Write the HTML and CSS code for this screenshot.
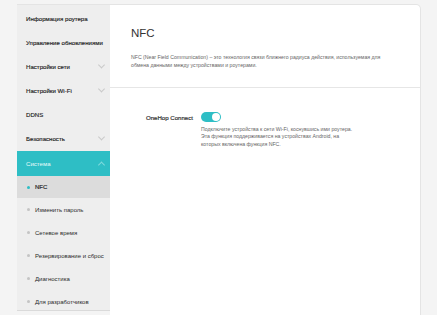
FILE: index.html
```html
<!DOCTYPE html>
<html lang="ru">
<head>
<meta charset="utf-8">
<link rel="stylesheet" href="styles.css">
</head>
<body>
<div class="layout">
  <nav class="sidebar">
    <div class="item">Информация роутера</div>
    <div class="item">Управление обновлениями</div>
    <div class="item">Настройки сети<span class="chev"></span></div>
    <div class="item">Настройки Wi-Fi<span class="chev"></span></div>
    <div class="item">DDNS</div>
    <div class="item">Безопасность<span class="chev"></span></div>
    <div class="item open">Система<span class="chev up"></span></div>
    <div class="sub active"><span class="dot"></span>NFC</div>
    <div class="sub"><span class="dot"></span>Изменить пароль</div>
    <div class="sub"><span class="dot"></span>Сетевое время</div>
    <div class="sub"><span class="dot"></span>Резервирование и сброс</div>
    <div class="sub"><span class="dot"></span>Диагностика</div>
    <div class="sub"><span class="dot"></span>Для разработчиков</div>
  </nav>
  <main class="card">
    <section class="head">
      <h1 class="title">NFC</h1>
      <p class="desc">NFC (Near Field Communication) – это технология связи ближнего радиуса действия, используемая для обмена данными между устройствами и роутерами.</p>
    </section>
    <section class="body">
      <div class="row">
        <div class="label">OneHop Connect</div>
        <div class="ctrl">
          <div class="toggle"><span class="knob"></span></div>
          <p class="hint">Подключите устройства к сети Wi-Fi, коснувшись ими роутера.<br>Эта функция поддерживается на устройствах Android, на<br>которых включена функция NFC.</p>
        </div>
      </div>
    </section>
  </main>
</div>
</body>
</html>
```
FILE: styles.css
```css
html, body {
  margin: 0;
  padding: 0;
  background: #f4f4f4;
  font-family: "Liberation Sans", Arial, sans-serif;
  color: #333;
  overflow: hidden;
}
.layout {
  display: flex;
  align-items: flex-start;
  padding: 4px 0 0 17px;
  height: 315px;
  box-sizing: border-box;
}
.sidebar {
  width: 93px;
  flex: none;
  background: #eeeeee;
  border-top: 1px solid #e4e4e4;
  border-bottom: 1px solid #dadada;
  padding-top: 1px;
  height: 307px;
  box-sizing: border-box;
  display: flex;
  flex-direction: column;
}
.item {
  height: 24px;
  display: flex;
  align-items: center;
  padding-left: 9px;
  padding-right: 6px;
  font-size: 6.1px;
  font-weight: normal;
  color: #1e1e1e;
  -webkit-text-stroke: 0.15px #1e1e1e;
  white-space: nowrap;
  flex: none;
}
.item.open {
  background: #2ebec5;
  color: #e8fbfb;
  -webkit-text-stroke: 0;
  height: 25px;
  margin-top: 1px;
}
.chev {
  margin-left: auto;
  width: 4px;
  height: 4px;
  border-right: 0.8px solid #c9c9c9;
  border-bottom: 0.8px solid #c9c9c9;
  -webkit-text-stroke: 0;
  transform: translateY(-1.5px) rotate(45deg);
}
.chev.up {
  border-color: #7fdadd;
  transform: translateY(1.5px) rotate(-135deg);
}
.sub {
  height: 23px;
  display: flex;
  align-items: center;
  padding-left: 9px;
  font-size: 6px;
  color: #2a2a2a;
  white-space: nowrap;
  flex: none;
}
.sub.active {
  background: #dcdcdc;
  -webkit-text-stroke: 0.2px #2a2a2a;
  height: 22px;
}
.dot {
  width: 3px;
  height: 3px;
  border-radius: 50%;
  background: #c4c4c4;
  margin-left: 1px;
  margin-right: 5px;
  -webkit-text-stroke: 0;
}
.active .dot {
  background: #2ebec5;
}
.card {
  width: 311px;
  flex: none;
  background: #fff;
  border: 1px solid #e4e4e4;
  border-left: none;
  border-top-right-radius: 5px;
  height: 320px;
  box-sizing: border-box;
}
.head {
  height: 83px;
  padding: 21px 0 0 21px;
  box-sizing: border-box;
  border-bottom: 1px solid #e6e6e6;
}
.title {
  margin: 0;
  font-size: 11.5px;
  font-weight: normal;
  color: #333;
  line-height: 14px;
}
.desc {
  margin: 13px 0 0;
  width: 258px;
  font-size: 5.2px;
  line-height: 8px;
  color: #666;
}
.body {
  padding: 24px 0 0 21px;
}
.row {
  display: flex;
  align-items: flex-start;
}
.label {
  width: 62px;
  text-align: right;
  font-size: 6.1px;
  font-weight: normal;
  -webkit-text-stroke: 0.2px #333;
  color: #333;
  line-height: 9px;
  padding-top: 1px;
  white-space: nowrap;
}
.ctrl {
  margin-left: 8px;
}
.toggle {
  width: 20px;
  height: 10px;
  border-radius: 5px;
  background: #2ebec5;
  display: flex;
  align-items: center;
  justify-content: flex-end;
  padding: 0 1px;
  box-sizing: border-box;
}
.knob {
  width: 8px;
  height: 8px;
  border-radius: 50%;
  background: #fff;
}
.hint {
  margin: 4px 0 0;
  font-size: 5.2px;
  line-height: 7.4px;
  color: #666;
  white-space: nowrap;
}
```
